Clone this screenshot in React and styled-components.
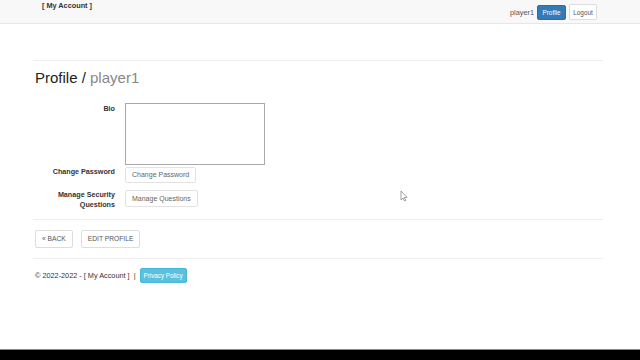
import styled, { createGlobalStyle } from "styled-components"

const Global = createGlobalStyle`
  html, body { margin: 0; padding: 0; background: #fff; }
  body { font-family: "Liberation Sans", Arial, sans-serif; color: #333; }
  * { box-sizing: border-box; }
`

const Page = styled.div`
  width: 640px;
  height: 360px;
  display: flex;
  flex-direction: column;
  position: relative;
  overflow: hidden;
`

const NavBar = styled.nav`
  height: 24px;
  flex: 0 0 24px;
  background: #f8f8f8;
  border-bottom: 1px solid #e7e7e7;
  display: flex;
  align-items: flex-start;
  padding: 0 43px 0 42px;
`

const Brand = styled.a`
  font-size: 7.3px;
  font-weight: bold;
  color: #333;
  margin-top: 2px;
  line-height: 8px;
`

const NavRight = styled.div`
  margin-left: auto;
  margin-top: 4px;
  display: flex;
  align-items: center;
  gap: 2px;
`

const UserName = styled.span`
  font-size: 7.3px;
  color: #555;
  margin-right: 1px;
`

const NavButton = styled.button`
  font-family: inherit;
  font-size: 6.4px;
  height: ${(p) => (p.$primary ? "15px" : "16px")};
  width: ${(p) => (p.$primary ? "29px" : "28px")};
  padding: 0;
  border-radius: 2px;
  border: 1px solid ${(p) => (p.$primary ? "#2e6da4" : "#ddd")};
  background: ${(p) => (p.$primary ? "#337ab7" : "#fff")};
  color: ${(p) => (p.$primary ? "#fff" : "#555")};
  margin-left: ${(p) => (p.$primary ? "0" : "1px")};
`

const Container = styled.main`
  padding: 0 35px;
  display: flex;
  flex-direction: column;
`

const Rule = styled.hr`
  border: 0;
  border-top: 1px solid #eee;
  margin: ${(p) => p.$m || "0"};
  width: 570px;
`

const Heading = styled.h2`
  font-size: 15px;
  font-weight: normal;
  line-height: 16.5px;
  margin: 9px 0 16px;
  color: #222;
`

const Muted = styled.span`
  color: #888;
`

const Form = styled.div`
  display: grid;
  grid-template-columns: 80px 1fr;
  column-gap: 10px;
  row-gap: 2px;
`

const Label = styled.label`
  font-size: 7.2px;
  font-weight: bold;
  text-align: right;
  color: #333;
  line-height: 10px;
  padding-top: ${(p) => p.$pt || "0"};
`

const Bio = styled.textarea`
  width: 140px;
  height: 62px;
  border: 1px solid #a9a9a9;
  border-radius: 0;
  resize: none;
  display: block;
`

const SmallButton = styled.button`
  font-family: inherit;
  font-size: 7px;
  color: #666;
  background: #fff;
  border: 1px solid #e2e2e2;
  border-radius: 2px;
  height: ${(p) => p.$h || "16px"};
  padding: 0 6px;
  justify-self: start;
  margin-top: ${(p) => p.$mt || "0"};
`

const Actions = styled.div`
  display: flex;
  gap: 8px;
  margin: 10px 0;
`

const ActionButton = styled.button`
  font-family: inherit;
  font-size: 6.7px;
  color: #555;
  background: #fff;
  border: 1px solid #ddd;
  border-radius: 2px;
  height: 18px;
  padding: 0 6px;
`

const Footer = styled.footer`
  display: flex;
  align-items: center;
  margin-top: 9px;
  font-size: 7.3px;
  color: #333;
  gap: 4px;
`

const PolicyButton = styled.button`
  font-family: inherit;
  font-size: 6.3px;
  color: #fff;
  background: #5bc0de;
  border: 1px solid #46b8da;
  border-radius: 2px;
  height: 15px;
  width: 47px;
  padding: 0;
`

const Spacer = styled.div`
  flex: 1;
`

const BottomBar = styled.div`
  flex: 0 0 11px;
  background: #000;
  border-top: 1px solid #888;
`

const Cursor = styled.svg`
  position: absolute;
  left: 400px;
  top: 190px;
`

export default function App() {
  return (
    <>
      <Global />
      <Page>
        <NavBar>
          <Brand>[ My Account ]</Brand>
          <NavRight>
            <UserName>player1</UserName>
            <NavButton $primary>Profile</NavButton>
            <NavButton>Logout</NavButton>
          </NavRight>
        </NavBar>
        <Container>
          <Rule $m="36px 0 0 -2px" />
          <Heading>
            Profile / <Muted>player1</Muted>
          </Heading>
          <Form>
            <Label $pt="1px">Bio</Label>
            <Bio />
            <Label>Change Password</Label>
            <SmallButton>Change Password</SmallButton>
            <Label $pt="5px">
              Manage Security
              <br />
              Questions
            </Label>
            <SmallButton $h="17px" $mt="5px">Manage Questions</SmallButton>
          </Form>
          <Rule $m="9px 0 0 -2px" />
          <Actions>
            <ActionButton>« BACK</ActionButton>
            <ActionButton>EDIT PROFILE</ActionButton>
          </Actions>
          <Rule $m="0 0 0 -2px" />
          <Footer>
            <span>© 2022-2022 - [ My Account ] &nbsp;|</span>
            <PolicyButton>Privacy Policy</PolicyButton>
          </Footer>
        </Container>
        <Spacer />
        <BottomBar />
        <Cursor width="8" height="12" viewBox="0 0 8 12">
          <path d="M1 1 L1 10 L3 8 L4.6 11 L5.8 10.4 L4.3 7.6 L7 7.4 Z" fill="#fff" stroke="#888" strokeWidth="0.8" />
        </Cursor>
      </Page>
    </>
  )
}
